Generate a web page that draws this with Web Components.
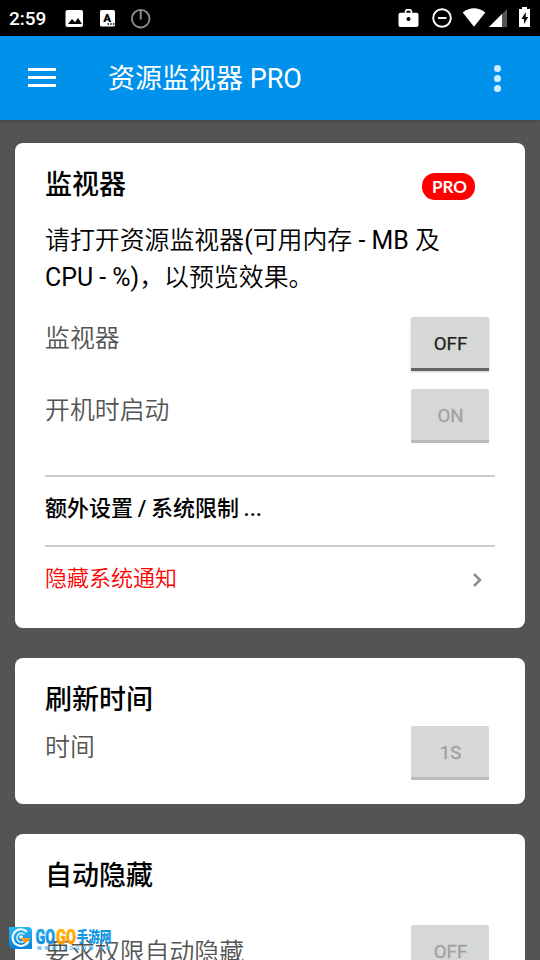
<!DOCTYPE html>
<html lang="zh-CN"><head><meta charset="utf-8"><title>资源监视器 PRO</title>
<style>
html,body{margin:0;height:960px;overflow:hidden;background:#545454}
body{font-family:Roboto,"Noto Sans CJK SC",sans-serif}
</style></head><body>
<monitor-app></monitor-app>
<script>
function define(name, html){
  const t=document.createElement('template');t.innerHTML=html;
  customElements.define(name,class extends HTMLElement{
    constructor(){super();this.attachShadow({mode:'open'}).append(t.content.cloneNode(true));}
  });
}
define('status-bar',`<style>
:host{display:flex;height:36px;background:#000;color:#fff;align-items:center;justify-content:space-between}
.time{font-weight:500;font-size:19px;line-height:37px;height:36px;padding-left:9px;width:56px;box-sizing:border-box;white-space:nowrap}
.l{display:flex}svg{display:block}
</style><div class="l"><span class="time">2:59</span>
<svg width="110" height="36" viewBox="56 0 110 36"><rect x="65.5" y="10" width="17.5" height="17" rx="2" fill="#fff"/><path d="M68 24l4-5 3 3.200 3-4.200 4 6z"/>
<rect x="100" y="10" width="15" height="16.500" rx="1.500" fill="#fff"/><text x="103.300" y="22" font-family="Roboto" font-size="11.500" font-weight="900">A</text><path d="M107.500 23.300h1.500v1.500h-1.500zm2.700 0h1.500v1.500h-1.500zm2.700 0h1.500v1.500h-1.500z"/>
<circle cx="140.700" cy="18.700" r="8.800" fill="none" stroke="#8d8d8d" stroke-width="1.900"/><path d="M140.700 10v9.500" stroke="#8d8d8d" stroke-width="2"/></svg></div>
<svg width="150" height="36" viewBox="390 0 150 36"><path fill="#fff" fill-rule="evenodd" d="M400.500 12.800h4.300v-2l1.500-1.800h4.400l1.500 1.800v2h4.300q2 0 2 2v10.200q0 2-2 2h-16q-2 0-2-2V14.800q0-2 2-2zm6-2v2h4v-2zm2 6.200a2 2 0 1 0 .01 0z"/>
<circle cx="442" cy="18" r="8.800" fill="none" stroke="#fff" stroke-width="1.900"/><path d="M438 18h8.500" stroke="#fff" stroke-width="1.900"/>
<path d="M462.700 12.400q11.300-8.400 22.600 0L474 26.800z" fill="#fff"/><path d="M507 9v18h-18z" fill="#555"/><path d="M502 14v13h-13z" fill="#fff"/>
<path d="M522 7h5v2h3v18h-11V9h3z" fill="#fff"/><path d="M525.700 12l-4.200 7h2.500v5l4.200-7h-2.500z"/></svg>`);
define('app-bar',`<style>
:host{display:flex;height:84px;background:#0091ea;align-items:center;color:#fff;box-shadow:0 1px 3px #0003;position:relative}
.menu{display:flex;flex-direction:column;gap:5px;width:28px;margin:0 0 1px 28px}.menu i{height:3px;background:#fff}
.title{margin-left:52px;flex:1;font-size:27px;line-height:86px;height:84px;font-weight:400;white-space:nowrap}
.more{display:flex;flex-direction:column;gap:3px;margin-right:39px}.more i{width:7px;height:7px;border-radius:50%;background:#d0ebff}
</style><div class="menu"><i></i><i></i><i></i></div><div class="title"><slot></slot></div><div class="more"><i></i><i></i><i></i></div>`);
define('setting-card',`<style>
:host{display:block;box-sizing:border-box;background:#fff;border-radius:8px;padding:0 30px;margin:0 15px 30px;flex:none}
.head{display:flex;height:83px;justify-content:space-between}
:host(.short) .head{height:68px}:host(.last) .head{height:91px}
.h{font-size:27px;line-height:40px;font-weight:500;padding-top:22px;color:#000;white-space:nowrap}
</style><div class="head"><div class="h"><slot name="title"></slot></div><slot name="badge"></slot></div><slot></slot>`);
define('pro-badge',`<style>
:host{display:block;box-sizing:border-box;width:53px;height:27px;border-radius:13px;background:#f00;color:#fff;font:700 17px/28px Lato,sans-serif;text-align:center;margin:30px 20px 0 0;padding-left:2px}
</style><slot></slot>`);
define('setting-row',`<style>
:host{display:flex;height:72px;justify-content:space-between;padding-right:6px;color:#545454;font-size:24.900px;font-weight:350}
.label{line-height:40px;padding-top:2px;white-space:nowrap}
:host(.low) .label{padding-top:8px}
</style><div class="label"><slot name="label"></slot></div><slot></slot>`);
define('toggle-button',`<style>
:host{display:block;box-sizing:border-box;width:78px;height:54px;background:#d6d8d7;border-bottom:3px solid #b9bbba;border-radius:2px 2px 0 0;text-align:center;font:400 18.700px/55px Roboto,sans-serif;color:#9fa1a0;-webkit-text-stroke:.3px #9fa1a0;padding-left:1px}
:host([enabled]){color:#202120;border-color:#636564;box-shadow:0 1px 3px #0003;-webkit-text-stroke:.25px #202120}
</style><slot></slot>`);
define('link-row',`<style>
:host{display:flex;box-sizing:border-box;height:70px;border-top:2px solid #ccc;font-size:22px;line-height:64px;font-weight:500;color:#000;justify-content:space-between;white-space:nowrap;word-spacing:-.800px}
:host(.alert){color:#f00;font-weight:350}svg{margin:25px 10px 0 0}
svg{display:none}:host(.alert) svg{display:block}
</style><slot></slot><svg width="14" height="16"><path d="M3 2l6 6-6 6" fill="none" stroke="#8c8c8c" stroke-width="2.500"/></svg>`);
define('site-mark',`<style>
:host{display:block;position:absolute;left:8px;top:924px;width:106px;height:30px}svg{display:block}
</style><svg width="106" height="30" viewBox="8 924 106 30"><defs><linearGradient id="b" x2="0" y2="1"><stop stop-color="#27b8f4"/><stop offset="1" stop-color="#0783dc"/></linearGradient><linearGradient id="o" x2="0" y2="1"><stop stop-color="#ffcb00"/><stop offset="1" stop-color="#ff8a00"/></linearGradient></defs>
<path d="M9 927h19q4 0 4 4v18H15q-6 0-6-6z" fill="url(#b)"/><path d="M27 932a8.300 8.300 0 1 0 1.500 9" fill="none" stroke="#fff" stroke-width="2"/><path d="M24.500 934.500a4.500 4.500 0 1 0 1 5" fill="none" stroke="#d8f2ff" stroke-width="1.500"/><circle cx="21" cy="937" r="1.800" fill="#fff"/><path d="M20 938h10q-1 4-5 5z" fill="#ff9d16"/>
<g font-family="Roboto,Noto Sans CJK SC,sans-serif" font-weight="900" font-size="21"><text x="35.500" y="943.500" textLength="19.500" lengthAdjust="spacingAndGlyphs" fill="url(#b)" stroke="#1599e5" stroke-width=".6">GO</text><text x="56" y="943.500" textLength="20" lengthAdjust="spacingAndGlyphs" fill="url(#o)" stroke="#ffa500" stroke-width=".6">GO</text><text x="76.500" y="942" font-size="15" textLength="35" lengthAdjust="spacingAndGlyphs" fill="#1596e3">手游网</text></g>
<text x="37" y="949.500" font-family="Roboto" font-weight="700" font-size="5.500" textLength="73" fill="#46b5ee">WWW.GOGOW.CN</text></svg>`);
define('monitor-app',`<style>
:host{display:flex;flex-direction:column;width:540px;height:960px;overflow:hidden;background:#545454;position:relative}
main{display:flex;flex-direction:column;padding-top:23px}
p{margin:-4px 0 4px;font-size:24.900px;line-height:37px;font-weight:350;color:#000;height:91px;white-space:nowrap}
p span{font-weight:400}
.one{height:485px}.short{height:146px}.last{height:200px}.end{height:86px}
</style><status-bar></status-bar><app-bar>资源监视器 PRO</app-bar><main>
<setting-card class="one"><span slot="title">监视器</span><pro-badge slot="badge">PRO</pro-badge>
<p>请打开资源监视器<span>(</span>可用内存<span> - MB </span>及<br><span>CPU - %)</span>，以预览效果。</p>
<setting-row><span slot="label">监视器</span><toggle-button enabled>OFF</toggle-button></setting-row>
<setting-row class="end"><span slot="label">开机时启动</span><toggle-button>ON</toggle-button></setting-row>
<link-row>额外设置 / 系统限制 ...</link-row><link-row class="alert">隐藏系统通知</link-row></setting-card>
<setting-card class="short"><span slot="title">刷新时间</span><setting-row><span slot="label">时间</span><toggle-button>1S</toggle-button></setting-row></setting-card>
<setting-card class="last"><span slot="title">自动隐藏</span><setting-row class="low"><span slot="label">要求权限自动隐藏</span><toggle-button>OFF</toggle-button></setting-row></setting-card>
</main><site-mark></site-mark>`);
</script></body></html>
